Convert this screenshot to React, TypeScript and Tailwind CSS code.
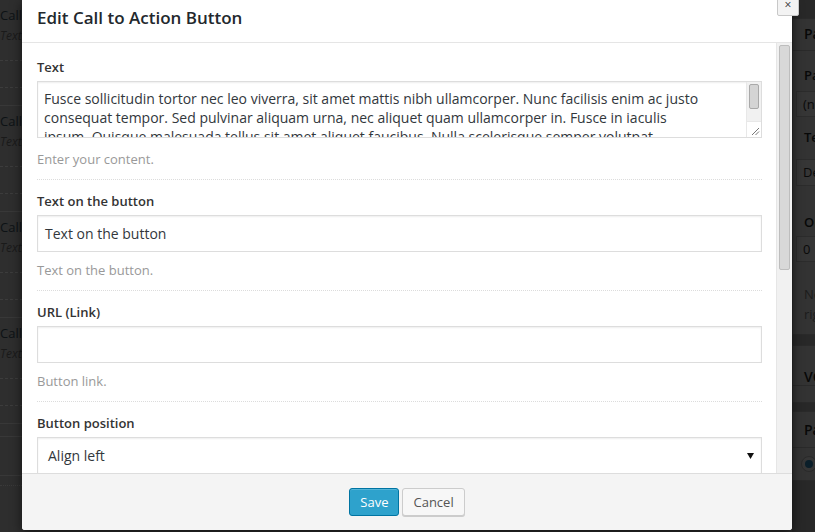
import React from "react";

// <---------- arka plandaki liste öğesi ---------------->
function BgItem() {
  return (
    <div className="h-[106px] border-b border-[#383838] pt-[4px] whitespace-nowrap">
      <div className="text-[13px] leading-[22px] text-[#0d1215]">Call to Action</div>
      <div className="text-[12px] leading-[20px] italic text-[#1a1a1a]">Text: Fusce sollicitudin</div>
      <div className="mt-[14px] border-t border-dashed border-[#3c3c3c]" />
      <div className="mt-[26px] border-t border-dashed border-[#3c3c3c]" />
    </div>
  );
}

function Field({
  label,
  desc,
  children,
  first,
}: {
  label: string;
  desc?: string;
  children: React.ReactNode;
  first?: boolean;
}) {
  return (
    <div
      className={
        first
          ? "pt-[14px] pb-[10px] border-b border-dotted border-[#dcdcdc]"
          : "pt-[11px] pb-[10px] border-b border-dotted border-[#dcdcdc]"
      }
    >
      <div className="text-[13px] leading-[20px] font-semibold text-[#333]">{label}</div>
      <div className="mt-[4px]">{children}</div>
      {desc && (
        <div
          className={
            first
              ? "mt-[11px] text-[13px] leading-[20px] text-[#999]"
              : "mt-[8px] text-[13px] leading-[20px] text-[#999]"
          }
        >
          {desc}
        </div>
      )}
    </div>
  );
}

export default function App() {
  return (
    <div className="relative h-[532px] w-[815px] overflow-hidden bg-[#2b2b2b] font-['Open_Sans',sans-serif]">
      {/* <---------- karartılmış arka plan sayfası ----------------> */}
      <div className="flex h-full">
        <div className="w-[792px] shrink-0 overflow-hidden bg-[#2e2e2e]">
          <BgItem />
          <BgItem />
          <BgItem />
          <BgItem />
          <div className="mt-[12px] h-[40px] border-y border-[#383838]" />
          <div className="h-[10px] border-b border-dotted border-[#3a3a3a]" />
        </div>
        <div className="min-w-0 flex-1 overflow-hidden whitespace-nowrap bg-[#282828]">
          <div className="mt-[18px] w-[280px] bg-[#333] border border-[#2a2a2a]">
            <div className="h-[32px] pl-[11px] pt-[5px] text-[14px] leading-[20px] font-semibold text-[#070808] border-b border-[#2a2a2a]">
              Page Attributes
            </div>
            <div className="pl-[3px]">
              <div className="mt-[14px] pl-[8px] text-[13px] leading-[20px] font-semibold text-[#070808]">Parent</div>
              <div className="mt-[6px] h-[26px] w-[250px] border border-[#2c2c2c] bg-[#363636] pl-[6px] text-[13px] leading-[24px] text-[#0a0a0a]">
                (no parent)
              </div>
              <div className="mt-[10px] pl-[8px] text-[13px] leading-[20px] font-semibold text-[#070808]">Template</div>
              <div className="mt-[12px] h-[27px] w-[250px] border border-[#2c2c2c] bg-[#363636] pl-[6px] text-[13px] leading-[25px] text-[#0a0a0a]">
                Default Template
              </div>
              <div className="mt-[26px] pl-[8px] text-[13px] leading-[20px] font-semibold text-[#070808]">Order</div>
              <div className="mt-[4px] h-[26px] w-[60px] border border-[#2c2c2c] bg-[#363636] pl-[6px] text-[13px] leading-[24px] text-[#0a0a0a]">
                0
              </div>
              <div className="mt-[22px] pl-[8px] text-[13px] leading-[20px] text-[#1c1c1c]">
                <div>Need help? Use the Help tab in the upper</div>
                <div>right corner</div>
              </div>
              <div className="h-[10px]" />
            </div>
          </div>
          <div className="mt-[10px] w-[280px] bg-[#333] border border-[#2a2a2a]">
            <div className="h-[40px] border-b border-[#2a2a2a] pl-[11px] pt-[21px] text-[14px] leading-[20px] font-semibold text-[#070808]">
              VC: Custom Teaser
            </div>
            <div className="h-[16px]" />
          </div>
          <div className="mt-[8px] w-[280px] bg-[#333] border border-[#2a2a2a]">
            <div className="h-[36px] pl-[11px] pt-[8px] text-[14px] leading-[20px] font-semibold text-[#070808] border-b border-[#2a2a2a]">
              Page Layout
            </div>
            <div className="py-[8px] pl-[8px]">
              <div className="flex h-[16px] w-[16px] items-center justify-center rounded-full border border-[#2a2a2a] bg-[#363636]">
                <div className="h-[8px] w-[8px] rounded-full bg-[#0b1f2a]" />
              </div>
            </div>
          </div>
        </div>
      </div>

      {/* <---------- modal ----------------> */}
      <div className="absolute left-[22px] top-0 flex h-[530px] w-[770px] flex-col overflow-hidden rounded-b-[3px] bg-white shadow-[0_3px_12px_rgba(0,0,0,0.6)]">
        <div className="h-[43px] shrink-0 border-b border-[#e5e5e5] pl-[15px] pt-[6px]">
          <div className="text-[17px] leading-[24px] font-semibold text-[#23282d]">Edit Call to Action Button</div>
        </div>

        <div className="flex h-[430px] shrink-0">
          <div className="flex-1 overflow-hidden pl-[15px] pr-[14px]">
            <Field label="Text" desc="Enter your content." first>
              <div className="relative h-[57px] overflow-hidden border border-[#ddd] shadow-[inset_0_1px_2px_rgba(0,0,0,0.07)]">
                <div className="pl-[6px] pt-[7px] text-[14px] leading-[19px] text-[#32373c] whitespace-nowrap">
                  <div>Fusce sollicitudin tortor nec leo viverra, sit amet mattis nibh ullamcorper. Nunc facilisis enim ac justo</div>
                  <div>consequat tempor. Sed pulvinar aliquam urna, nec aliquet quam ullamcorper in. Fusce in iaculis</div>
                  <div>ipsum. Quisque malesuada tellus sit amet aliquet faucibus. Nulla scelerisque semper volutpat.</div>
                </div>
                <div className="absolute right-0 top-0 flex h-full w-[15px] flex-col bg-white">
                  <div className="h-[39px] border-l border-[#e8e8e8] bg-[#f1f1f1] px-[2px] pt-[2px]">
                    <div className="h-[25px] rounded-[2px] border border-[#a9a9a9] bg-[#d4d4d4]" />
                  </div>
                  <div className="relative flex-1 border-l border-t border-[#e8e8e8] bg-white">
                    <svg className="absolute bottom-[1px] right-[1px]" width="9" height="9" viewBox="0 0 9 9">
                      <path d="M8 1L1 8M8 4.5L4.5 8" stroke="#777" strokeWidth="1" />
                    </svg>
                  </div>
                </div>
              </div>
            </Field>

            <Field label="Text on the button" desc="Text on the button.">
              <div className="h-[37px] border border-[#ddd] pl-[7px] text-[14px] leading-[35px] text-[#32373c] shadow-[inset_0_1px_2px_rgba(0,0,0,0.07)]">
                Text on the button
              </div>
            </Field>

            <Field label="URL (Link)" desc="Button link.">
              <div className="h-[37px] border border-[#ddd] shadow-[inset_0_1px_2px_rgba(0,0,0,0.07)]" />
            </Field>

            <div className="pt-[11px]">
              <div className="text-[13px] leading-[20px] font-semibold text-[#333]">Button position</div>
              <div className="mt-[4px] flex h-[37px] items-center justify-between border border-[#ddd] pl-[10px] pr-[7px] shadow-[inset_0_1px_2px_rgba(0,0,0,0.07)]">
                <span className="text-[14px] leading-[20px] text-[#32373c]">Align left</span>
                <svg width="7" height="6" viewBox="0 0 7 6">
                  <path d="M0 0H7L3.5 6Z" fill="#111" />
                </svg>
              </div>
            </div>
          </div>

          {/* kaydırma çubuğu */}
          <div className="w-[16px] shrink-0 border-l border-[#e6e6e6] bg-[#f1f1f1] pl-[2px] pr-[2px] pt-[2px]">
            <div className="h-[225px] rounded-[2px] border border-[#bdbdbd] bg-[#d8d8d8]" />
          </div>
        </div>

        <div className="flex flex-1 items-center justify-center gap-[3px] border-t border-[#ddd] bg-[#f4f4f4]">
          <button className="h-[28px] rounded-[3px] border border-[#0074a2] bg-[#2ea2cc] px-[10px] text-[13px] leading-[26px] text-white shadow-[inset_0_1px_0_rgba(120,200,230,0.5)]">
            Save
          </button>
          <button className="h-[28px] rounded-[3px] border border-[#ccc] bg-[#f7f7f7] px-[10px] text-[13px] leading-[26px] text-[#555] shadow-[0_1px_0_#ccc]">
            Cancel
          </button>
        </div>
      </div>

      {/* kapat düğmesi */}
      <div className="absolute left-[777px] top-[-6px] flex h-[22px] w-[22px] items-center justify-center rounded-[2px] border border-[#c8c8c8] bg-[#f3f3f3] text-[12px] leading-none text-[#333]">
        ×
      </div>
    </div>
  );
}
